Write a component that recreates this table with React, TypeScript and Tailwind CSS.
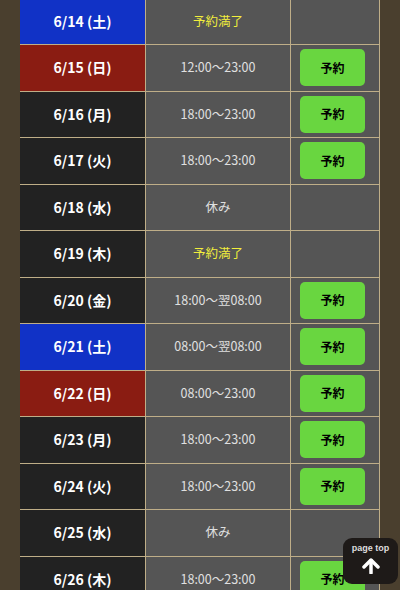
import React from 'react';

type Row = { date: string; kind: 'sat' | 'sun' | 'day'; status: string; open: boolean };

const rows: Row[] = [
    { date: '6/14 (土)', kind: 'sat', status: '予約満了', open: false },
    { date: '6/15 (日)', kind: 'sun', status: '12:00〜23:00', open: true },
    { date: '6/16 (月)', kind: 'day', status: '18:00〜23:00', open: true },
    { date: '6/17 (火)', kind: 'day', status: '18:00〜23:00', open: true },
    { date: '6/18 (水)', kind: 'day', status: '休み', open: false },
    { date: '6/19 (木)', kind: 'day', status: '予約満了', open: false },
    { date: '6/20 (金)', kind: 'day', status: '18:00〜翌08:00', open: true },
    { date: '6/21 (土)', kind: 'sat', status: '08:00〜翌08:00', open: true },
    { date: '6/22 (日)', kind: 'sun', status: '08:00〜23:00', open: true },
    { date: '6/23 (月)', kind: 'day', status: '18:00〜23:00', open: true },
    { date: '6/24 (火)', kind: 'day', status: '18:00〜23:00', open: true },
    { date: '6/25 (水)', kind: 'day', status: '休み', open: false },
    { date: '6/26 (木)', kind: 'day', status: '18:00〜23:00', open: true },
];

const dateBg = {
    sat: 'bg-[#1132c6]',
    sun: 'bg-[#8a1c12]',
    day: 'bg-[#222222]',
};

export default function App() {
    return (
        <div className="h-[590px] w-[400px] overflow-hidden bg-[#4a3f2e] relative font-['Noto_Sans_CJK_JP','Noto_Sans',sans-serif]">
            <div className="ml-[20px] w-[360px] -mt-[1.5px] border-r border-[#bfae88]">
                {rows.map((r) => (
                    <div key={r.date} className="flex h-[46.5px] border-b border-[#bfae88]">
                        <div className={`w-[125px] shrink-0 flex items-center justify-center text-white font-bold text-[14px] ${dateBg[r.kind]}`}>
                            {r.date}
                        </div>
                        <div className={`w-[145px] shrink-0 border-l-[1.5px] border-[#bfae88] bg-[#555555] flex items-center justify-center text-[12.5px] ${r.status === '予約満了' ? 'text-[#f2ee3c]' : 'text-[#e0e0e0]'}`}>
                            {r.status}
                        </div>
                        <div className="flex-1 border-l border-[#bfae88] bg-[#555555] flex items-center pl-[9px]">
                            {r.open && (
                                <button className="w-[65px] h-[37px] rounded-[5px] bg-[#69d640] text-black font-bold text-[12px]">
                                    予約
                                </button>
                            )}
                        </div>
                    </div>
                ))}
            </div>

            {/* page top */}
            <div className="absolute left-[343px] top-[538px] w-[55px] h-[46px] rounded-[9px] bg-[#1e1a18] flex flex-col items-center pt-[6px]">
                <span className="text-[9px] leading-none font-bold text-[#dddddd] font-['Liberation_Sans',sans-serif]">page top</span>
                <svg viewBox="0 0 20 16" className="w-[20px] h-[16px] mt-[5px]" fill="none" stroke="white" strokeWidth="3.5" strokeLinecap="round" strokeLinejoin="round">
                    <path d="M10 15V2.5" />
                    <path d="M3 9l7-7 7 7" />
                </svg>
            </div>
        </div>
    );
}
